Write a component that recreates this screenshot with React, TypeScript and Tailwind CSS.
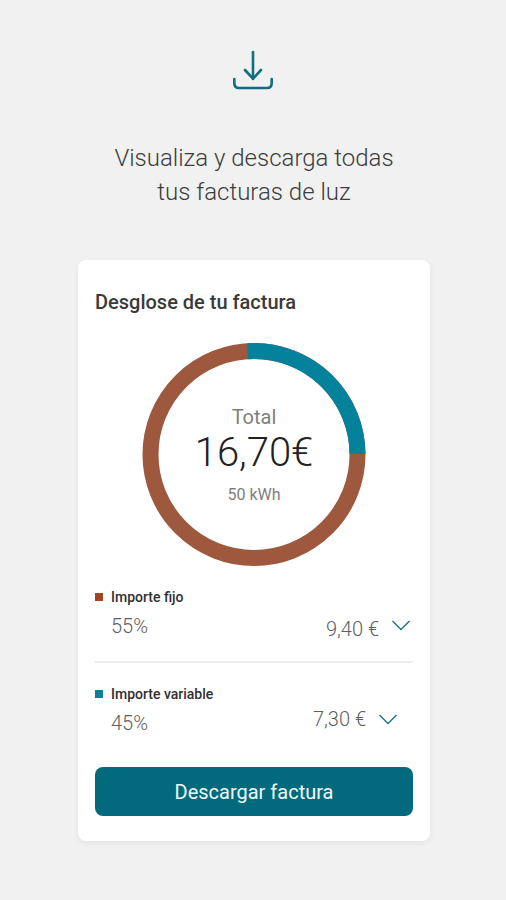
import clsx from "clsx"

const items = [
  {
    label: "Importe fijo",
    percent: "55%",
    amount: "9,40 €",
    marker: "bg-[#a0451f]",
    row: "border-b-2 border-[#ececec] pb-[18px]",
    toggle: "items-start pt-7 pr-0.5",
  },
  {
    label: "Importe variable",
    percent: "45%",
    amount: "7,30 €",
    marker: "bg-[#07809a]",
    row: "pt-[21px] pb-[30px]",
    toggle: "items-center pt-[17px] pr-[15px]",
  },
]

function DownloadIcon() {
  return (
    <svg className="h-[42px] w-[42px]" viewBox="0 0 42 42" fill="none" stroke="#136d82" strokeWidth="2.6" strokeLinecap="round" strokeLinejoin="round" aria-hidden="true">
      <path d="M20 2V29" />
      <path d="M12 20L20 28.7L28 20" />
      <path d="M1.3 29V33Q1.3 38 6 38H34Q38.7 38 38.7 33V29" />
    </svg>
  )
}

function Chevron() {
  return (
    <svg className="h-5 w-5" viewBox="0 0 20 20" fill="none" stroke="#17748c" strokeWidth="1.4" aria-hidden="true">
      <path d="M1.5 6L10 14.5L18.5 6" />
    </svg>
  )
}

function InvoiceChart() {
  return (
    <div className="relative mx-auto mt-[27px] h-56 w-56">
      <svg className="h-full w-full" viewBox="0 0 224 224" fill="none" strokeWidth="16" aria-hidden="true">
        <circle cx="112" cy="111.5" r="103.5" stroke="#9d583d" />
        <path d="M105.5 8.2A103.5 103.5 0 0 1 215.5 111" stroke="#04829c" />
      </svg>
      <div className="absolute inset-0 flex flex-col items-center pt-[62px]">
        <span className="text-xl leading-6 text-[#808080]">Total</span>
        <span className="text-[40px] leading-[48px] font-light text-[#222222]">16,70€</span>
        <span className="mt-2 text-base leading-5 text-[#808080]">50 kWh</span>
      </div>
    </div>
  )
}

export default function App() {
  return (
    <main className="min-h-screen bg-[#f1f1f1] pt-[50px] pr-6 pb-[58px] pl-[26px] font-['Roboto',sans-serif]">
      <header className="flex flex-col items-center">
        <DownloadIcon />
        <h1 className="mt-[49px] text-center text-2xl leading-[34px] font-light text-[#3c3c3c]">
          Visualiza y descarga todas
          <br />
          tus facturas de luz
        </h1>
      </header>

      <section className="mx-auto mt-[51px] max-w-[352px] rounded-lg bg-white px-[17px] pt-7 pb-[25px] shadow-[0_2px_6px_rgba(0,0,0,0.06)]">
        <h2 className="text-xl leading-7 font-medium text-[#3a3a3a]">Desglose de tu factura</h2>

        <InvoiceChart />

        <ul className="mt-5">
          {items.map((item) => (
            <li key={item.label} className={clsx("flex justify-between", item.row)}>
              <div className="flex gap-2">
                <span className={clsx("mt-[6px] h-2 w-2", item.marker)} />
                <div>
                  <h3 className="text-sm leading-5 font-medium text-[#303030]">{item.label}</h3>
                  <p className="mt-[5px] text-xl leading-7 font-light text-[#606060]">{item.percent}</p>
                </div>
              </div>
              <button type="button" aria-label={`${item.label}: ${item.amount}`} className={clsx("flex gap-3", item.toggle)}>
                <span className="text-xl leading-7 font-light text-[#606060]">{item.amount}</span>
                <Chevron />
              </button>
            </li>
          ))}
        </ul>

        <button type="button" className="h-[49px] w-full rounded-lg bg-[#036a7e] text-xl text-[#eefafc]">
          Descargar factura
        </button>
      </section>
    </main>
  )
}
